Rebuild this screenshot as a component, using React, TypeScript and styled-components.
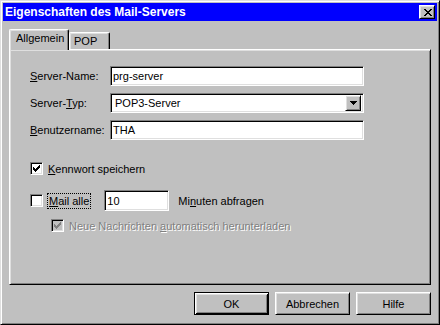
import React from 'react'
import styled, { createGlobalStyle, css } from 'styled-components'

const GlobalStyle = createGlobalStyle`
  html, body {
    margin: 0;
    padding: 0;
    background: #c0c0c0;
  }
  body {
    font-family: "Liberation Sans", Arial, sans-serif;
    font-size: 11px;
    color: #000;
  }
`

// classic 3D edges
const raisedButton = css`
  border: 1px solid;
  border-color: #fff #000 #000 #fff;
  box-shadow: inset 1px 1px #dfdfdf, inset -1px -1px #808080;
`

const sunken = css`
  border: 1px solid;
  border-color: #808080 #fff #fff #808080;
  box-shadow: inset 1px 1px #000, inset -1px -1px #dfdfdf;
`

const Window = styled.div`
  width: 440px;
  height: 325px;
  box-sizing: border-box;
  border: 1px solid;
  border-color: #dfdfdf #000 #000 #dfdfdf;
  box-shadow: inset 1px 1px #fff, inset -1px -1px #808080;
  padding: 2px;
  display: flex;
  flex-direction: column;
  background: #c0c0c0;
`

const TitleBar = styled.div`
  height: 18px;
  background: #0000ff;
  color: #fff;
  font-weight: bold;
  font-size: 12px;
  display: flex;
  align-items: center;
  justify-content: space-between;
  padding: 0 2px 0 2px;
`

const CloseButton = styled.div`
  ${raisedButton};
  width: 16px;
  height: 14px;
  box-sizing: border-box;
  background: #c0c0c0;
  display: flex;
  align-items: center;
  justify-content: center;
  padding-left: 1px;
`

const Body = styled.div`
  display: flex;
  flex-direction: column;
  padding: 8px 6px 0 6px;
`

const TabRow = styled.div`
  display: flex;
  align-items: flex-end;
  height: 21px;
  margin-bottom: -1px;
  position: relative;
  z-index: 1;
`

const Tab = styled.div<{ $active?: boolean; $width: number }>`
  box-sizing: border-box;
  width: ${p => p.$width}px;
  height: ${p => (p.$active ? 21 : 17)}px;
  margin-bottom: ${p => (p.$active ? 0 : 1)}px;
  background: #c0c0c0;
  border-left: 1px solid #fff;
  border-top: 1px solid #fff;
  border-right: 1px solid #000;
  border-radius: 2px 2px 0 0;
  box-shadow: inset -1px 0 #808080, inset 1px 1px #dfdfdf;
  padding: 2px 0 0 ${p => (p.$active ? 6 : 4)}px;
  line-height: 13px;
`

const Panel = styled.div`
  box-sizing: border-box;
  height: 236px;
  border: 1px solid;
  border-color: #fff #000 #000 #fff;
  box-shadow: inset 1px 1px #dfdfdf, inset -1px -1px #808080;
  padding: 16px 0 0 20px;
  display: flex;
  flex-direction: column;
`

const FormGrid = styled.div`
  display: grid;
  grid-template-columns: 80px 254px;
  grid-auto-rows: 20px;
  row-gap: 7px;
  align-items: center;
`

const Label = styled.span`
  white-space: nowrap;
`

const TextField = styled.input<{ $width?: number; $height?: number }>`
  ${sunken};
  box-sizing: border-box;
  width: ${p => p.$width ?? 254}px;
  height: ${p => p.$height ?? 20}px;
  margin: 0;
  padding: 0 2px;
  background: #fff;
  font-family: "Liberation Sans", Arial, sans-serif;
  font-size: 11px;
  color: #000;
  outline: none;
`

const Combo = styled.div`
  ${sunken};
  box-sizing: border-box;
  width: 254px;
  height: 20px;
  background: #fff;
  display: flex;
  align-items: center;
  justify-content: space-between;
  padding: 2px 2px 2px 4px;
`

const DropButton = styled.div`
  ${raisedButton};
  box-sizing: border-box;
  width: 16px;
  height: 16px;
  background: #c0c0c0;
  display: flex;
  align-items: center;
  justify-content: center;
`

const CheckRow = styled.div<{ $top: number; $indent?: number; $height: number }>`
  display: flex;
  align-items: center;
  height: ${p => p.$height}px;
  margin-top: ${p => p.$top}px;
  margin-left: ${p => p.$indent ?? 0}px;
  white-space: nowrap;
`

const CheckBox = styled.div<{ $disabled?: boolean }>`
  ${sunken};
  box-sizing: border-box;
  width: 13px;
  height: 13px;
  background: ${p => (p.$disabled ? '#c0c0c0' : '#fff')};
  display: flex;
  align-items: center;
  justify-content: center;
  margin-right: 5px;
  flex-shrink: 0;
`

const FocusLabel = styled.span`
  outline: 1px dotted #000;
  outline-offset: 0;
  padding: 1px 1px;
  margin-right: 14px;
`

const DisabledText = styled.span`
  color: #808080;
  text-shadow: 1px 1px 0 #fff;
`

const AfterField = styled.span`
  margin-left: 9px;
`

const ButtonRow = styled.div`
  display: flex;
  justify-content: flex-end;
  gap: 6px;
  margin-top: 7px;
`

const PushButton = styled.div<{ $default?: boolean }>`
  box-sizing: border-box;
  width: 75px;
  height: 23px;
  display: flex;
  align-items: center;
  justify-content: center;
  background: #c0c0c0;
  ${p =>
    p.$default
      ? css`
          border: 1px solid #000;
          box-shadow: inset 1px 1px #fff, inset -1px -1px #000,
            inset 2px 2px #dfdfdf, inset -2px -2px #808080;
        `
      : raisedButton}
`

const CheckMark = ({ color = '#000' }: { color?: string }) => (
  <svg width="7" height="7" viewBox="0 0 7 7" shapeRendering="crispEdges">
    <path
      fill={color}
      d="M6 0h1v3h-1zM5 1h1v3h-1zM4 2h1v3h-1zM3 3h1v3h-1zM2 4h1v3h-1zM1 3h1v3h-1zM0 2h1v3h-1z"
    />
  </svg>
)

const CloseGlyph = () => (
  <svg width="8" height="7" viewBox="0 0 8 7" shapeRendering="crispEdges">
    <path
      fill="#000"
      d="M0 0h2v1h-2zM6 0h2v1h-2zM1 1h2v1h-2zM5 1h2v1h-2zM2 2h4v1h-4zM3 3h2v1h-2zM2 4h4v1h-4zM1 5h2v1h-2zM5 5h2v1h-2zM0 6h2v1h-2zM6 6h2v1h-2z"
    />
  </svg>
)

const DownArrow = () => (
  <svg width="7" height="4" viewBox="0 0 7 4" shapeRendering="crispEdges">
    <path fill="#000" d="M0 0h7v1h-7zM1 1h5v1h-5zM2 2h3v1h-3zM3 3h1v1h-1z" />
  </svg>
)

const App = () => {
  return (
    <>
      <GlobalStyle />
      <Window>
        <TitleBar>
          <span>Eigenschaften des Mail-Servers</span>
          <CloseButton>
            <CloseGlyph />
          </CloseButton>
        </TitleBar>

        <Body>
          <TabRow>
            <Tab $active $width={60}>Allgemein</Tab>
            <Tab $width={41}>POP</Tab>
          </TabRow>

          <Panel>
            <FormGrid>
              <Label>
                <u>S</u>erver-Name:
              </Label>
              <TextField readOnly defaultValue="prg-server" />

              <Label>
                Server-<u>T</u>yp:
              </Label>
              <Combo>
                <span>POP3-Server</span>
                <DropButton>
                  <DownArrow />
                </DropButton>
              </Combo>

              <Label>
                <u>B</u>enutzername:
              </Label>
              <TextField readOnly defaultValue="THA" />
            </FormGrid>

            <CheckRow $top={22} $height={13}>
              <CheckBox>
                <CheckMark />
              </CheckBox>
              <span>
                <u>K</u>ennwort speichern
              </span>
            </CheckRow>

            <CheckRow $top={15} $height={21}>
              <CheckBox />
              <FocusLabel>
                <u>M</u>ail alle
              </FocusLabel>
              <TextField readOnly defaultValue="10" $width={65} $height={21} />
              <AfterField>
                Mi<u>n</u>uten abfragen
              </AfterField>
            </CheckRow>

            <CheckRow $top={8} $height={13} $indent={21}>
              <CheckBox $disabled>
                <CheckMark color="#808080" />
              </CheckBox>
              <DisabledText>
                Neue Nachrichten <u>a</u>utomatisch herunterladen
              </DisabledText>
            </CheckRow>
          </Panel>

          <ButtonRow>
            <PushButton $default>OK</PushButton>
            <PushButton>Abbrechen</PushButton>
            <PushButton>Hilfe</PushButton>
          </ButtonRow>
        </Body>
      </Window>
    </>
  )
}

export default App
